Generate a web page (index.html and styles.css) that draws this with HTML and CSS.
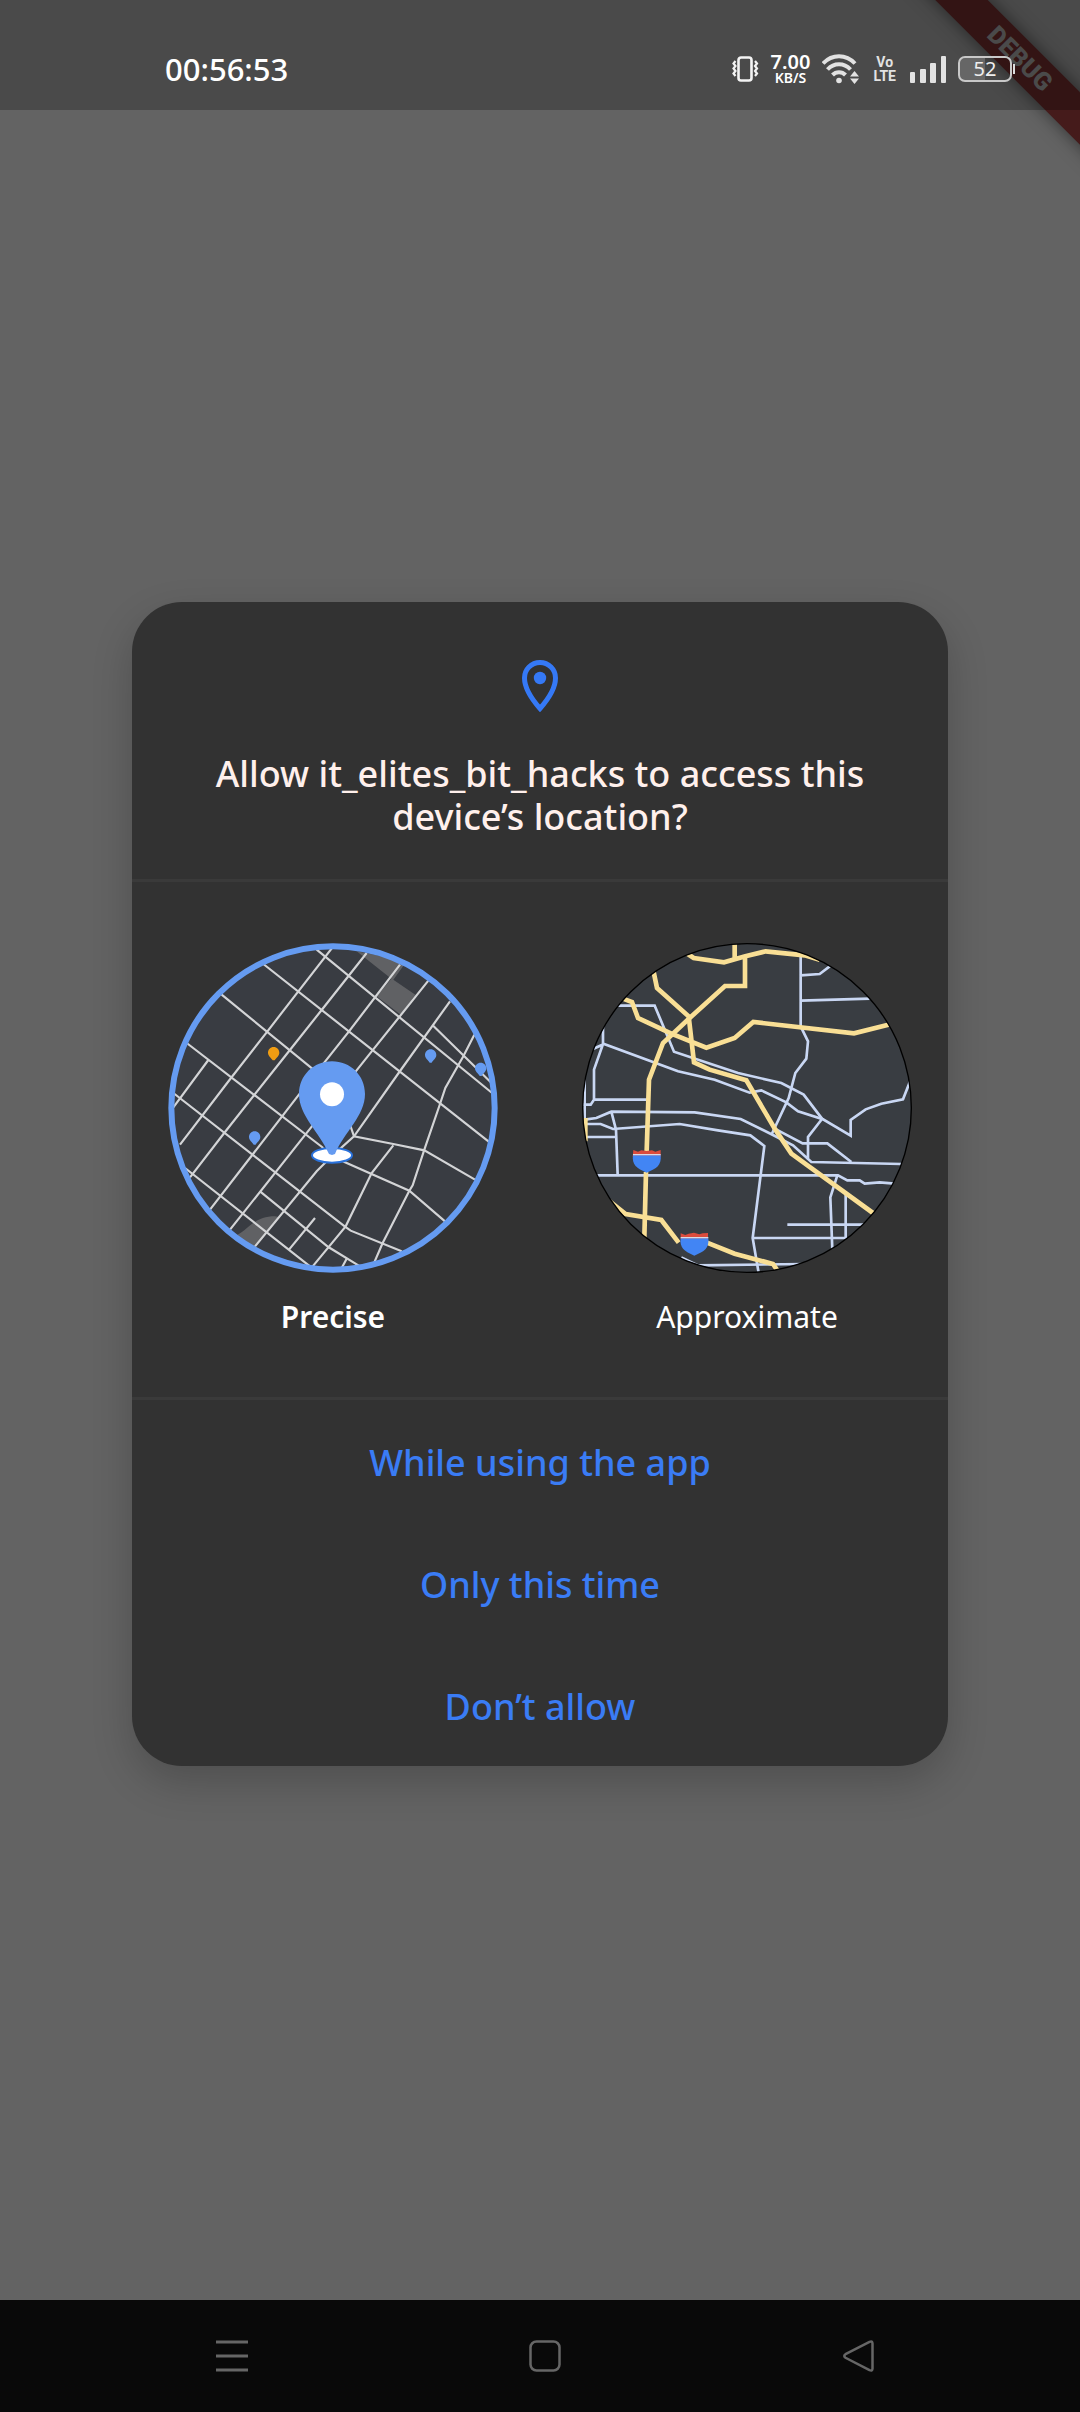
FILE: index.html
```html
<!DOCTYPE html>
<html lang="en">
<head>
<meta charset="utf-8">
<meta name="viewport" content="width=device-width, initial-scale=1">
<title>Location permission</title>
<link rel="stylesheet" href="styles.css">
</head>
<body>
<div class="ribbon-clip"><span class="ribbon">DEBUG</span></div>

<header class="status">
  <time class="clock">00:56:53</time>
  <div class="status-icons">
    <svg class="vibrate" viewBox="0 0 27 26" aria-hidden="true"><rect x="6.500" y="1.500" width="13" height="23" rx="2.500" fill="none" stroke="#f4f4f4" stroke-width="2.600"/><path d="M3.500 5 1.500 7.500 3.500 10 1.500 12.500 3.500 15 1.500 17.500 3.500 20M23 5l2 2.500-2 2.500 2 2.500-2 2.500 2 2.500-2 2.500" fill="none" stroke="#f4f4f4" stroke-width="2.200"/></svg>
    <div class="speed"><span class="speed-value">7.00</span><span class="speed-unit">KB/S</span></div>
    <svg class="wifi" viewBox="0 0 37 30" aria-hidden="true"><g fill="none" stroke="#e2e2e2" stroke-width="4"><path d="M1 9.500C10-.2 24-.2 33 9.500"/><path d="M5.500 15.500c6.500-7 16.500-7 23 0"/><path d="M10.500 21c3.600-3.800 9.400-3.800 13 0"/></g><circle cx="17" cy="26.500" r="2.800" fill="#e2e2e2"/><path d="m32.500 17 4.500 5.500h-9zM32.500 30l4.500-5.500h-9z" fill="#e2e2e2"/></svg>
    <div class="volte"><span>Vo</span><span>LTE</span></div>
    <svg class="signal" viewBox="0 0 36 27" aria-hidden="true"><g fill="#e2e2e2"><rect y="16" width="5" height="11" rx="1"/><rect x="10" y="13" width="6" height="14" rx="1"/><rect x="20" y="7" width="6" height="20" rx="1"/><rect x="31" width="5" height="27" rx="1"/></g></svg>
    <div class="battery">52</div>
  </div>
</header>

<main class="stage">
  <form class="dialog" role="dialog" aria-labelledby="question">
    <div class="head">
      <svg class="pin" viewBox="0 0 36 52" aria-hidden="true"><path d="M18 2.500C9.300 2.500 2.500 9.400 2.500 18c0 9.500 6.700 20.500 15.500 30.500C26.800 38.500 33.500 27.500 33.500 18 33.500 9.400 26.700 2.500 18 2.500z" fill="none" stroke="#3579f6" stroke-width="5"/><circle cx="18" cy="18" r="6.200" fill="#3579f6"/></svg>
      <h1 id="question" class="question">Allow it_elites_bit_hacks to access this device’s location?</h1>
    </div>

    <div class="options" role="radiogroup" aria-labelledby="question">
      <label class="option">
        <input class="option-input" type="radio" name="accuracy" value="precise" checked>
        <svg class="map" viewBox="24 25 990 990" aria-hidden="true">
          <clipPath id="left-clip"><circle cx="519" cy="520" r="485"/></clipPath>
          <g clip-path="url(#left-clip)">
            <circle cx="519" cy="520" r="490" fill="#393c42"/>
            <path d="M590 50 700 135 766 180 722 240 650 185 694 132M590 50 740 80 700 135zM220 905c40-10 55-60 125-60l15 3-65 80-15 20z" fill="#606164"/>
            <g fill="none" stroke="#d3d4d6" stroke-width="6.500">
              <path d="M470 45 1000 478M310 88 990 624M185 180 500 437M80 325 490 640M40 475 555 876 572 888 725 950M75 700 450 995M300 770 505 937 600 995M818 272 1000 450"/>
              <path d="M520 35 415 170 320 293 213 430 60 630M620 55 485 226 385 352 195 592 90 728M720 90 567 290 415 482 150 825M805 138 637 348 436 600 210 885M870 200 718 412 582 605 515 665 470 710 285 935M145 376 35 525M943 300 910 365 856 460 840 508 793 645 758 752 748 768 668 925 640 990M700 632 635 715 557 875 458 995M465 850 387 945M560 972 545 1000"/>
              <path d="M570 570 582 605 700 628 793 647 945 735M490 650 555 683 748 768 855 860"/>
            </g>
            <ellipse cx="516" cy="662" rx="60" ry="22" fill="#fff" stroke="#2a72dc" stroke-width="6"/>
            <path d="M516 380c-55 0-99 42-99 98 0 65 62 115 90 180l9 3 9-3c28-65 90-115 90-180 0-56-44-98-99-98z" fill="#659bf1"/>
            <circle cx="516" cy="479" r="36" fill="#fff"/>
            <path d="M341 337c-10 0-17 8-17 17 0 10 10 16 14 23h6c4-7 14-13 14-23 0-9-7-17-17-17z" fill="#f09d13"/>
            <path d="M812 344c-10 0-17 8-17 17 0 10 10 16 14 23h6c4-7 14-13 14-23 0-9-7-17-17-17zM284 590c-10 0-17 8-17 17 0 10 10 16 14 23h6c4-7 14-13 14-23 0-9-7-17-17-17zM962 384c-10 0-17 8-17 17 0 10 10 16 14 23h6c4-7 14-13 14-23 0-9-7-17-17-17z" fill="#659bf1"/>
          </g>
          <circle class="ring" cx="519" cy="520" r="485"/>
        </svg>
        <span class="option-name">Precise</span>
      </label>
      <label class="option">
        <input class="option-input" type="radio" name="accuracy" value="approximate">
        <svg class="map" viewBox="32 25 990 990" aria-hidden="true">
          <clipPath id="right-clip"><circle cx="527" cy="520" r="493"/></clipPath>
          <g clip-path="url(#right-clip)">
            <circle cx="527" cy="520" r="493" fill="#393d42"/>
            <g fill="none" stroke="#c9d7f3" stroke-width="8">
              <path d="M130 213H250L308 351 500 415 630 445 697 480 752 552 838 603V556L883 524 930 507 995 494 1018 435"/>
              <path d="M65 343 98 328 320 410 430 435 535 474 570 467 645 503 680 530 752 553 710 607V675M95 270V328L68 405V495L58 510H35M68 495H228M40 430V555L75 550 120 531 370 533 508 553 605 601 665 632 720 682 990 688M45 568H88L125 583 325 568 440 587 537 602 579 634 544 910 562 1015M120 531 134 585 139 720M45 607H134"/>
              <path d="M75 722H800L828 737H865L880 747 925 743 970 747M798 722 777 788 783 945M648 870H880M823 780V910H544M330 968 380 992 700 988"/>
              <path d="M688 60V275L710 320 705 372 672 415 652 490 600 601M688 122 745 118 778 93M688 198 895 192M610 582 694 626H768L840 682"/>
            </g>
            <g fill="none" stroke="#f9df95" stroke-width="14">
              <path d="M490 25V70M345 55 367 70 458 83 522 65 583 50 700 62 745 75M521 65V154H461L355 250 275 325 233 435 226 650M224 712 219 910"/>
              <path d="M247 112 257 160 352 245 368 383 415 405 525 437 612 585 660 657 905 835M155 192 182 202 200 250 300 297 405 339 490 310 546 262 848 296 960 268M42 550V620M115 800 163 838 270 856 322 924M405 923 490 957 605 988 620 1010"/>
            </g>
            <path d="M186 646l14 5 10-4 16 2 16-2 10 4 16-5v20h-84z" fill="#dc4c3d"/>
            <path d="M185 662h83c3 30-12 40-42 52-30-12-45-24-41-52z" fill="#4285f4"/><path d="M185 660h83" stroke="#d8dbe5" stroke-width="4"/>
            <path d="M328 896l14 5 10-4 16-3 16 5 10-3 16-1v18h-82z" fill="#dc4c3d"/>
            <path d="M328 911h83c3 30-12 40-42 52-30-12-45-24-41-52z" fill="#4285f4"/><path d="M328 909h83" stroke="#d8dbe5" stroke-width="4"/>
          </g>
          <circle class="ring" cx="527" cy="520" r="493"/>
        </svg>
        <span class="option-name">Approximate</span>
      </label>
    </div>

    <div class="actions">
      <button class="action" type="button">While using the app</button>
      <button class="action" type="button">Only this time</button>
      <button class="action" type="button">Don’t allow</button>
    </div>
  </form>
</main>

<nav class="navbar">
  <button class="nav-button" type="button" aria-label="Recent apps"><svg viewBox="0 0 32 32"><path d="M0 2h32M0 16h32M0 30h32" stroke-width="3"/></svg></button>
  <button class="nav-button" type="button" aria-label="Home"><svg viewBox="0 0 32 32"><rect x="1.500" y="1.500" width="29" height="29" rx="6" stroke-width="2.500"/></svg></button>
  <button class="nav-button" type="button" aria-label="Back"><svg viewBox="0 0 32 32"><path d="M2.500 14.200 26.500 1.800q3-1.300 3 1.700v25q0 3-3 1.700L2.500 17.800q-2.500-1.800 0-3.600z" stroke-width="2.500"/></svg></button>
</nav>
</body>
</html>
```

FILE: styles.css
```css
* {
  box-sizing: border-box;
}

body {
  position: relative;
  display: flex;
  flex-direction: column;
  min-height: 100vh;
  margin: 0;
  background: #636363;
  color: #fff;
  font-family: "Noto Sans", sans-serif;
}

button {
  margin: 0;
  padding: 0;
  border: 0;
  background: none;
  font: inherit;
}

/* Corner ribbon, beneath the translucent status bar */
.ribbon-clip {
  position: absolute;
  top: 0;
  right: 0;
  width: 200px;
  height: 200px;
  overflow: hidden;
}

.ribbon {
  position: absolute;
  top: 40px;
  right: -90px;
  width: 300px;
  background: #451b1b;
  box-shadow: 0 0 18px rgba(0, 0, 0, 0.5);
  color: #636363;
  font: 900 25px/37px Roboto, sans-serif;
  text-align: center;
  transform: rotate(45deg);
}

.status {
  position: relative;
  display: flex;
  align-items: center;
  justify-content: space-between;
  height: 110px;
  padding: 28px 68px 0 165px;
  background: rgba(0, 0, 0, 0.25);
}

.clock {
  font-size: 31px;
  font-weight: 500;
}

.status-icons {
  display: flex;
  align-items: center;
  gap: 12px;
}

.vibrate {
  width: 27px;
  height: 26px;
}

.speed {
  display: flex;
  flex-direction: column;
  align-items: center;
  font-weight: 600;
}

.speed-value {
  font-size: 20px;
  line-height: 18px;
}

.speed-unit {
  font-size: 14px;
  line-height: 14px;
}

.wifi {
  width: 37px;
  height: 30px;
}

.volte {
  display: flex;
  flex-direction: column;
  align-items: center;
  padding: 0 2px;
  color: #e2e2e2;
  font: 700 14px/14px Roboto, sans-serif;
}

.signal {
  width: 36px;
  height: 27px;
}

.battery {
  position: relative;
  width: 54px;
  height: 26px;
  border: 2px solid #c8c8c8;
  border-radius: 7px;
  background: linear-gradient(90deg, #666 50%, transparent 50%);
  color: #eee;
  font-size: 20px;
  line-height: 22px;
  text-align: center;
}

.battery::after {
  content: "";
  position: absolute;
  top: 6px;
  right: -5px;
  width: 2px;
  height: 10px;
  background: #ddd;
}

.stage {
  display: flex;
  flex: 1;
  align-items: center;
  justify-content: center;
  padding: 0 40px 42px;
}

.dialog {
  width: 100%;
  max-width: 816px;
  overflow: hidden;
  border-radius: 50px;
  background: #323232;
  box-shadow: 0 16px 40px rgba(0, 0, 0, 0.2);
}

.head {
  display: flex;
  flex-direction: column;
  align-items: center;
  gap: 40px;
  padding: 58px 60px 41px;
  border-bottom: 3px solid #3a3a3a;
}

.pin {
  width: 36px;
  height: 52px;
}

.question {
  margin: 0;
  color: #fff0ec;
  font-size: 36px;
  font-weight: 500;
  line-height: 43px;
  text-align: center;
}

.options {
  display: flex;
  flex-wrap: wrap;
  justify-content: space-between;
  gap: 24px;
  padding: 61px 36px 58px;
  border-bottom: 3px solid #3a3a3a;
}

.option {
  display: flex;
  flex-direction: column;
  align-items: center;
  gap: 22px;
}

.option-input {
  position: absolute;
  opacity: 0;
}

.map {
  width: 330px;
  height: 330px;
}

.ring {
  fill: none;
  stroke: #000;
  stroke-width: 4;
}

.option-input:checked + .map .ring {
  stroke: #659bf1;
  stroke-width: 18;
}

.option-name {
  font-size: 30px;
  line-height: 44px;
}

.option-input:checked ~ .option-name {
  font-weight: 600;
}

.actions {
  display: flex;
  flex-direction: column;
}

.action {
  height: 122px;
  padding-top: 3px;
  color: #3a7cf5;
  font-size: 36px;
  font-weight: 500;
}

.navbar {
  display: flex;
  align-items: center;
  justify-content: space-between;
  height: 112px;
  padding: 0 19% 0 20%;
  background: #090909;
}

.nav-button {
  display: flex;
}

.nav-button svg {
  width: 32px;
  height: 32px;
  fill: none;
  stroke: #666;
}
```
